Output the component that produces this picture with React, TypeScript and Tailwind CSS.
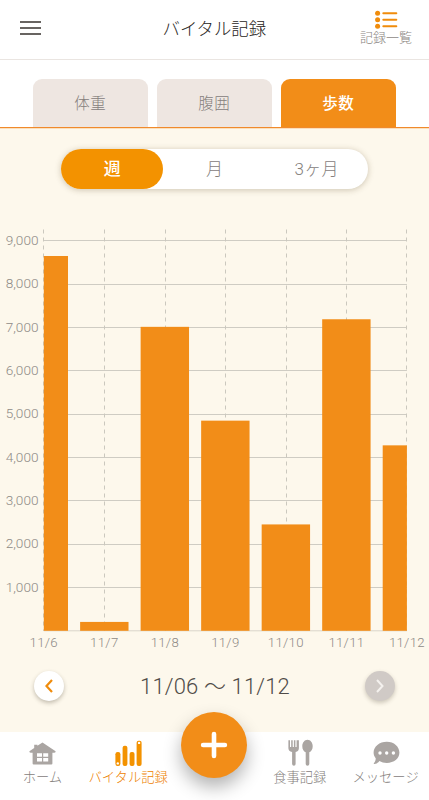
import type { ReactNode } from "react";

interface IRecord {
    date: string,
    steps: number,
}

const records: IRecord[] = [
    { date: '11/6', steps: 8650 },
    { date: '11/7', steps: 205 },
    { date: '11/8', steps: 7015 },
    { date: '11/9', steps: 4850 },
    { date: '11/10', steps: 2455 },
    { date: '11/11', steps: 7190 },
    { date: '11/12', steps: 4280 },
];

const ticks = [1000, 2000, 3000, 4000, 5000, 6000, 7000, 8000, 9000];

// chart geometry
const LEFT = 43.8;
const RIGHT = 406.9;
const BASE = 405.8;
const STEP = (RIGHT - LEFT) / 6;
const BAR = 48.4;
const toY = (value: number) => BASE - value * 0.04333;

function StepsChart() {
    return (
        <svg width="429" height="430" viewBox="0 0 429 430" className="block font-['Roboto']">
            {ticks.map((tick) => (
                <g key={tick}>
                    <line x1={LEFT} x2={RIGHT} y1={Math.floor(toY(tick)) + 0.5} y2={Math.floor(toY(tick)) + 0.5} stroke="#cfccc3" />
                    <text x="38.5" y={toY(tick) + 4.3} textAnchor="end" className="fill-[#8e8a86] text-[13.6px] font-light">
                        {tick.toLocaleString('en-US')}
                    </text>
                </g>
            ))}
            <line x1={LEFT} x2={RIGHT} y1={BASE} y2={BASE} stroke="#d9d5ca" />
            {records.map((record, i) => {
                const center = LEFT + STEP * i;
                const start = Math.max(center - BAR / 2, LEFT);
                const end = Math.min(center + BAR / 2, RIGHT);
                const lineX = i === 0 ? 43.5 : Math.min(Math.floor(center + 0.2), 406) + 0.5;
                return (
                    <g key={record.date}>
                        <line x1={lineX} x2={lineX} y1="4.5" y2={BASE} stroke="#cbc8be" strokeDasharray="4 4" />
                        <rect x={start} y={toY(record.steps)} width={end - start} height={BASE - toY(record.steps)} fill="#f28d18" />
                        <text x={center} y="422.3" textAnchor="middle" className="fill-[#8e8a86] text-[13.2px] font-light tracking-[0.3px]">
                            {record.date}
                        </text>
                    </g>
                );
            })}
        </svg>
    )
}

function HomeIcon() {
    return (
        <svg width="27" height="24" viewBox="0 0 27 24">
            <path d="M13.5 .4 26.6 9.2Q26.8 10.8 25 10.8H23.4V21.4Q23.4 22.4 22.4 22.4H4.6Q3.6 22.4 3.6 21.4V10.8H2Q.2 10.8 .4 9.2L5.2 6V2.7H8.4V3.8Z" fill="#aaa5a2" />
            <path d="M8 11.2h5v3.6H8zM14.2 11.2h5v3.6h-5zM8 16h5v3.4H8zM14.2 16h5v3.4h-5z" fill="#fff" />
        </svg>
    )
}

function VitalIcon() {
    return (
        <svg width="27" height="26" viewBox="0 0 27 26">
            <g fill="#f39200">
                <rect x=".4" y="12" width="5" height="14" rx="2.2" />
                <rect x="7.6" y="5.8" width="4.8" height="20.2" rx="2" />
                <rect x="14.6" y="12" width="4.9" height="14" rx="2" />
                <rect x="21.6" y=".7" width="5" height="25.3" rx="2" />
            </g>
            <circle cx="2.8" cy="23.4" r="1.2" fill="#fff" />
            <circle cx="24.1" cy="2.9" r="1.2" fill="#fff" />
        </svg>
    )
}

function MealIcon() {
    return (
        <svg width="27" height="27" viewBox="0 0 27 27" fill="#aaa5a2">
            <path d="M1.4 1.2H3V8H4.2V1.2H5.7V8H6.9V1.2H8.4V8H9.6V1.2H11.9V9.2Q11.9 12.2 8.6 12.9V25Q8.6 26.8 6.9 26.8T5.1 25V12.9Q1.4 12.2 1.4 9.2Z" />
            <path d="M20.5 .8C23.4 .8 25.7 3.7 25.7 7.2C25.7 10.3 24.3 12.4 22.3 13.2V25Q22.3 26.8 20.5 26.8T18.7 25V13.2C16.6 12.4 15.3 10.3 15.3 7.2C15.3 3.7 17.6 .8 20.5 .8Z" />
        </svg>
    )
}

function MessageIcon() {
    return (
        <svg width="27" height="25" viewBox="0 0 27 25">
            <path d="M13.8 .7C21 .7 26.4 5.6 26.4 11.6S21 22 13.8 22C11 22 8.5 21.3 6.4 20.1C5.2 21.8 3.1 23 1.2 22.9Q.3 22.7 1 21.9C2.2 20.6 2.8 19 2.7 17.2C1.2 15.6 .6 13.8 .6 11.6C.6 5.6 6.4 .7 13.8 .7Z" fill="#aaa5a2" />
            <g fill="#fff">
                <circle cx="7" cy="12" r="1.7" />
                <circle cx="13.7" cy="12" r="1.7" />
                <circle cx="20.4" cy="12" r="1.7" />
            </g>
        </svg>
    )
}

function NavItem({ label, children, active }: { label: string, children: ReactNode, active?: boolean }) {
    return (
        <button className={`flex w-[86px] flex-col items-center whitespace-nowrap text-[13.3px] font-light leading-5 ${active ? 'text-[#ee8200]' : 'text-[#85807c]'}`}>
            <span className="flex h-[26px] items-end">{children}</span>
            <span className="mt-0.5 -ml-px">{label}</span>
        </button>
    )
}

export default function App() {
    return (
        <div className="flex h-[800px] w-[429px] flex-col overflow-hidden bg-[#fdf8ec] font-['Roboto','Noto_Sans_CJK_JP',sans-serif] text-[#504c48]">
            <header className="flex h-[60px] shrink-0 items-start border-b border-[#eae5e1] bg-white">
                <button className="mt-[21px] ml-[20px] flex w-[52px] flex-col gap-1">
                    <span className="h-[2px] w-[21px] bg-[#686461]"></span>
                    <span className="h-[2px] w-[21px] bg-[#686461]"></span>
                    <span className="h-[2px] w-[21px] bg-[#686461]"></span>
                </button>
                <h1 className="mt-[17px] ml-[90.5px] text-[17.4px] font-light leading-6 text-[#282522]">バイタル記録</h1>
                <button className="mt-[10px] mr-[16.5px] ml-auto flex w-[53px] flex-col items-center">
                    <svg width="23" height="20" viewBox="0 0 23 20" fill="#f08c0c">
                        <circle cx="2.6" cy="3.2" r="2.5" />
                        <circle cx="2.6" cy="9.8" r="2.5" />
                        <circle cx="2.6" cy="16.3" r="2.5" />
                        <rect x="7.3" y="2.2" width="15" height="2" rx="1" />
                        <rect x="7.3" y="8.8" width="15" height="2" rx="1" />
                        <rect x="7.3" y="15.3" width="15" height="2" rx="1" />
                    </svg>
                    <span className="whitespace-nowrap text-[13px] font-light leading-4 text-[#8b8682]">記録一覧</span>
                </button>
            </header>

            <div className="flex h-[68px] shrink-0 items-end gap-[8.5px] border-b border-[#f08a2c] bg-white pl-[32.5px] text-[15.5px] leading-5 tracking-[0.6px] shadow-[0_1px_0_#fbdfbb]">
                <button className="h-12 w-[115.5px] rounded-t-[9px] bg-[#eee6e1] pt-0.5 font-light text-[#85807c]">体重</button>
                <button className="h-12 w-[115.5px] rounded-t-[9px] bg-[#eee6e1] pt-0.5 font-light text-[#85807c]">腹囲</button>
                <button className="h-12 w-[115.5px] rounded-t-[9px] bg-[#f28d18] pt-0.5 font-medium text-white">歩数</button>
            </div>

            <div className="mt-[21px] ml-[61px] flex h-[39.5px] w-[307px] shrink-0 rounded-full bg-white text-[17px] font-light text-[#85807c] shadow-[0_1px_6px_rgba(80,60,20,0.28)]">
                <button className="w-[102.3px] rounded-full bg-[#f39200] pt-0.5 font-medium text-white">週</button>
                <button className="w-[102.3px] pt-0.5">月</button>
                <button className="w-[102.3px] pt-0.5 tracking-[0.3px]">3ヶ月</button>
            </div>

            <main className="mt-[36.5px] h-[430px] shrink-0">
                <StepsChart />
            </main>

            <div className="mt-[15px] flex h-[31px] shrink-0 items-center justify-between pl-[34px] pr-[34px]">
                <button className="flex size-[30px] items-center justify-center rounded-full bg-white shadow-[0_2px_4px_rgba(60,50,30,0.3)]">
                    <svg width="8" height="14" viewBox="0 0 8 14" fill="none" stroke="#f08c0c" strokeWidth="2.2"><path d="M7 1 1.5 7 7 13" /></svg>
                </button>
                <span className="pt-0.5 pl-px text-[22px] font-light leading-[30px] tracking-[0.15px]">11/06 ～ 11/12</span>
                <button className="flex size-[30px] items-center justify-center rounded-full bg-[#d0cac6] shadow-[0_2px_4px_rgba(60,50,30,0.25)]">
                    <svg width="8" height="14" viewBox="0 0 8 14" fill="none" stroke="#f4f1ee" strokeWidth="2"><path d="M1 1 6.5 7 1 13" /></svg>
                </button>
            </div>

            <nav className="relative mt-[31px] flex h-[68px] shrink-0 justify-between bg-white pt-2">
                <NavItem label="ホーム"><HomeIcon /></NavItem>
                <NavItem label="バイタル記録" active><VitalIcon /></NavItem>
                <button className="absolute -top-5 left-[181px] flex size-[66px] items-center justify-center rounded-full bg-[#f28d18] shadow-[0_9px_18px_rgba(0,0,0,0.3)]">
                    <svg width="28" height="28" viewBox="0 0 28 28" stroke="#fff" strokeWidth="4.6" strokeLinecap="round"><path d="M14 3.1V24.9M3.1 14H24.9" /></svg>
                </button>
                <span className="w-[86px]"></span>
                <NavItem label="食事記録"><MealIcon /></NavItem>
                <NavItem label="メッセージ"><MessageIcon /></NavItem>
            </nav>
        </div>
    )
}
